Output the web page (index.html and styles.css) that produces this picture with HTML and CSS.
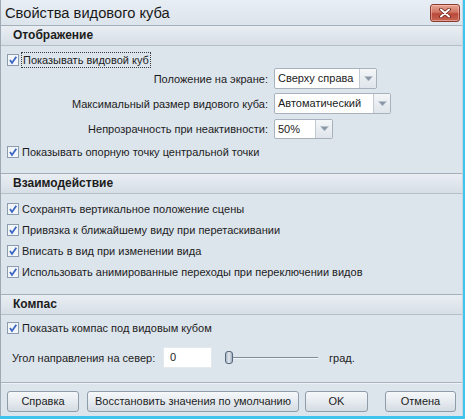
FILE: index.html
```html
<!DOCTYPE html>
<html lang="ru">
<head>
<meta charset="utf-8">
<title>Свойства видового куба</title>
<link rel="stylesheet" href="styles.css">
</head>
<body>
<div class="dialog">
  <div class="titlebar">
    <span class="title">Свойства видового куба</span>
    <button class="close" aria-label="Закрыть">
      <svg width="14" height="10" viewBox="0 0 14 10"><path d="M3 1.5 L11 8.5 M11 1.5 L3 8.5" stroke="#6a2018" stroke-width="3.6" stroke-linecap="round"/><path d="M3 1.5 L11 8.5 M11 1.5 L3 8.5" stroke="#ffffff" stroke-width="2" stroke-linecap="round"/></svg>
    </button>
  </div>

  <section class="group group-display">
    <div class="group-head">Отображение</div>
    <div class="group-body">
      <label class="check"><span class="box"><svg width="12" height="12" viewBox="0 0 12 12"><rect x="0.5" y="0.5" width="11" height="11" fill="#f3f6f9" stroke="#8c9bad"/><path d="M3 6 L5 9 L9.3 2.8" fill="none" stroke="#3b66c4" stroke-width="1.8"/></svg></span><span class="text focus">Показывать видовой куб</span></label>
      <div class="form-grid">
        <span class="flabel">Положение на экране:</span>
        <div class="select sel-pos"><span class="sel-text">Сверху справа</span><span class="sel-arrow"><svg width="9" height="6" viewBox="0 0 9 6"><path d="M0.5 0.5 H8.5 L4.5 5 Z" fill="#8896a6" stroke="#b9c3ce" stroke-width="0.6"/></svg></span></div>
        <span class="flabel">Максимальный размер видового куба:</span>
        <div class="select sel-size"><span class="sel-text">Автоматический</span><span class="sel-arrow"><svg width="9" height="6" viewBox="0 0 9 6"><path d="M0.5 0.5 H8.5 L4.5 5 Z" fill="#8896a6" stroke="#b9c3ce" stroke-width="0.6"/></svg></span></div>
        <span class="flabel">Непрозрачность при неактивности:</span>
        <div class="select sel-opacity"><span class="sel-text">50%</span><span class="sel-arrow"><svg width="9" height="6" viewBox="0 0 9 6"><path d="M0.5 0.5 H8.5 L4.5 5 Z" fill="#8896a6" stroke="#b9c3ce" stroke-width="0.6"/></svg></span></div>
      </div>
      <label class="check check-after"><span class="box"><svg width="12" height="12" viewBox="0 0 12 12"><rect x="0.5" y="0.5" width="11" height="11" fill="#f3f6f9" stroke="#8c9bad"/><path d="M3 6 L5 9 L9.3 2.8" fill="none" stroke="#3b66c4" stroke-width="1.8"/></svg></span><span class="text">Показывать опорную точку центральной точки</span></label>
    </div>
  </section>

  <section class="group group-interact">
    <div class="group-head">Взаимодействие</div>
    <div class="group-body check-list">
      <label class="check"><span class="box"><svg width="12" height="12" viewBox="0 0 12 12"><rect x="0.5" y="0.5" width="11" height="11" fill="#f3f6f9" stroke="#8c9bad"/><path d="M3 6 L5 9 L9.3 2.8" fill="none" stroke="#3b66c4" stroke-width="1.8"/></svg></span><span class="text">Сохранять вертикальное положение сцены</span></label>
      <label class="check"><span class="box"><svg width="12" height="12" viewBox="0 0 12 12"><rect x="0.5" y="0.5" width="11" height="11" fill="#f3f6f9" stroke="#8c9bad"/><path d="M3 6 L5 9 L9.3 2.8" fill="none" stroke="#3b66c4" stroke-width="1.8"/></svg></span><span class="text">Привязка к ближайшему виду при перетаскивании</span></label>
      <label class="check"><span class="box"><svg width="12" height="12" viewBox="0 0 12 12"><rect x="0.5" y="0.5" width="11" height="11" fill="#f3f6f9" stroke="#8c9bad"/><path d="M3 6 L5 9 L9.3 2.8" fill="none" stroke="#3b66c4" stroke-width="1.8"/></svg></span><span class="text">Вписать в вид при изменении вида</span></label>
      <label class="check"><span class="box"><svg width="12" height="12" viewBox="0 0 12 12"><rect x="0.5" y="0.5" width="11" height="11" fill="#f3f6f9" stroke="#8c9bad"/><path d="M3 6 L5 9 L9.3 2.8" fill="none" stroke="#3b66c4" stroke-width="1.8"/></svg></span><span class="text">Использовать анимированные переходы при переключении видов</span></label>
    </div>
  </section>

  <section class="group group-compass">
    <div class="group-head">Компас</div>
    <div class="group-body">
      <label class="check"><span class="box"><svg width="12" height="12" viewBox="0 0 12 12"><rect x="0.5" y="0.5" width="11" height="11" fill="#f3f6f9" stroke="#8c9bad"/><path d="M3 6 L5 9 L9.3 2.8" fill="none" stroke="#3b66c4" stroke-width="1.8"/></svg></span><span class="text">Показать компас под видовым кубом</span></label>
      <div class="angle-row">
        <span class="angle-label">Угол направления на север:</span>
        <span class="angle-input">0</span>
        <span class="slider"><span class="thumb"></span><span class="track"></span></span>
        <span class="unit">град.</span>
      </div>
    </div>
  </section>

  <div class="footer">
    <button class="btn btn-help">Справка</button>
    <button class="btn btn-reset">Восстановить значения по умолчанию</button>
    <button class="btn btn-ok">OK</button>
    <button class="btn btn-cancel">Отмена</button>
  </div>
</div>
</body>
</html>
```

FILE: styles.css
```css
* { box-sizing: border-box; }

html, body { margin: 0; padding: 0; }

body {
  width: 465px;
  height: 419px;
  overflow: hidden;
  background: #3fc4ee;
  font-family: "Liberation Sans", Arial, sans-serif;
  font-size: 11px;
  color: #1c1c1c;
}

.dialog {
  width: 463px;
  height: 416px;
  background: #dce4ec;
  border-left: 1px solid #9ea9b4;
  border-right: 1px solid #c9d6e2;
  display: flex;
  flex-direction: column;
}

/* title bar */
.titlebar {
  height: 25px;
  flex: 0 0 25px;
  display: flex;
  align-items: center;
  justify-content: space-between;
  padding-left: 4px;
  padding-right: 2px;
  background: linear-gradient(#e8eef4, #dce4ec);
}

.title {
  font-size: 14.7px;
  color: #1a1a1a;
}

.close {
  width: 30px;
  height: 18px;
  margin-top: 1px;
  padding: 0;
  border: 1px solid #8c3a2e;
  border-radius: 3px;
  background: linear-gradient(#e7a594, #d17563 45%, #b8483a 55%, #c86652);
  display: flex;
  align-items: center;
  justify-content: center;
  box-shadow: inset 0 0 0 1px rgba(255, 220, 210, 0.45);
}

/* groups */
.group-head {
  height: 21px;
  border-top: 1px solid #a4afba;
  border-bottom: 1px solid #b4bfca;
  background: linear-gradient(#e9eef3, #d6dee6);
  padding-left: 12px;
  font-size: 12px;
  font-weight: bold;
  line-height: 19px;
}

.group-body {
  padding-left: 6px;
  display: flex;
  flex-direction: column;
}

.group-display .group-body { padding-top: 6px; padding-bottom: 13px; }
.group-interact .group-body { padding-top: 7px; padding-bottom: 14px; gap: 5px; }
.group-compass .group-body { padding-top: 5px; padding-bottom: 14px; }

.check {
  height: 16px;
  display: flex;
  align-items: center;
  gap: 3px;
  white-space: nowrap;
}

.box {
  width: 12px;
  height: 12px;
  display: flex;
}

.focus {
  outline: 1px dotted #3a3a3a;
  outline-offset: 0;
  padding: 0 1px;
  line-height: 14px;
}

.check-after { margin-top: 5px; }

/* form grid */
.form-grid {
  display: grid;
  grid-template-columns: 261px auto;
  grid-auto-rows: 21px;
  column-gap: 6px;
  row-gap: 4px;
  align-items: center;
}

.flabel {
  justify-self: end;
  white-space: nowrap;
}

.select {
  justify-self: start;
  height: 21px;
  display: flex;
  background: #ffffff;
  border: 1px solid #a7b2bd;
  border-radius: 2px;
}

.sel-pos { width: 103px; }
.sel-size { width: 117px; }
.sel-opacity { width: 59px; height: 20px; }

.sel-text {
  flex: 1;
  padding-left: 3px;
  line-height: 19px;
  white-space: nowrap;
}

.sel-arrow {
  width: 17px;
  border-left: 1px solid #c2cbd4;
  background: linear-gradient(#f4f6f8, #dfe5eb);
  display: flex;
  align-items: center;
  justify-content: center;
}

/* compass angle row */
.angle-row {
  margin-top: 11px;
  height: 21px;
  display: flex;
  align-items: center;
  padding-left: 5px;
  white-space: nowrap;
}

.angle-label {
  flex: 0 0 151px;
}

.angle-input {
  width: 49px;
  height: 21px;
  background: #ffffff;
  border: 1px solid #e4e9ee;
  padding-left: 6px;
  line-height: 19px;
}

.slider {
  width: 94px;
  height: 14px;
  margin-left: 12px;
  display: flex;
  align-items: center;
}

.thumb {
  width: 8px;
  height: 13px;
  margin-left: 1px;
  border: 1px solid #55677a;
  border-radius: 3px;
  background: linear-gradient(90deg, #a9b6c4, #e3e9ef 50%, #a2afbd);
}

.track {
  flex: 1;
  height: 2px;
  border-top: 1px solid #7f8b97;
  border-bottom: 1px solid #f4f7fa;
}

.unit {
  margin-left: 11px;
}

/* footer */
.footer {
  border-top: 1px solid #a9b3bd;
  box-shadow: inset 0 1px 0 #eef2f6;
  padding-top: 8px;
  padding-left: 6px;
  display: flex;
}

.btn {
  height: 21px;
  padding: 0;
  border: 1px solid #8e9ba9;
  border-radius: 3px;
  background: linear-gradient(#f6f8fa, #e6ebf0 50%, #d4dbe2);
  font-family: "Liberation Sans", Arial, sans-serif;
  font-size: 11px;
  color: #1c1c1c;
  line-height: 19px;
  white-space: nowrap;
}

.btn-help { width: 72px; }
.btn-reset { width: 212px; margin-left: 8px; }
.btn-ok { width: 63px; margin-left: 6px; }
.btn-cancel { width: 71px; margin-left: 17px; }
```
